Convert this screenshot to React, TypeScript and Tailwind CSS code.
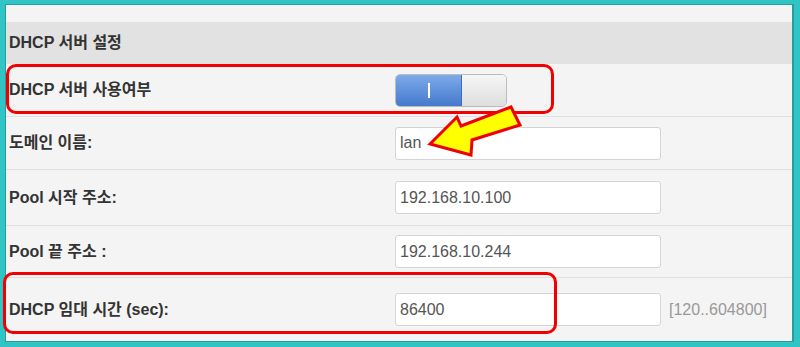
import React from "react";

const font = { fontFamily: '"Liberation Sans", Arial, "Noto Sans CJK KR", sans-serif' };

function Row(props: { label: string; h: string; children?: React.ReactNode; last?: boolean }) {
  return (
    <div className={`flex items-center ${props.h} ${props.last ? "" : "border-b border-[#e0e0e0]"}`}>
      <div className="w-[389px] pl-[3px] text-[16px] font-bold text-[#333]">{props.label}</div>
      {props.children}
    </div>
  );
}

function Field(props: { value: string }) {
  return (
    <div className="w-[266px] h-[33px] flex items-center px-[4px] bg-white border border-[#d4d4d4] rounded-[3px] text-[16px] text-[#555]">
      {props.value}
    </div>
  );
}

export default function App() {
  return (
    <div className="w-[800px] h-[347px] bg-[#31c4c4] pl-[5px] pt-[4px] pr-[6px] pb-[5px]" style={font}>
      <div className="relative h-full bg-[#f4f4f4] border-l border-t border-r-2 border-b border-[#239f9f] flex flex-col">
        <div className="h-[17px] shrink-0" />
        <div className="h-[42px] shrink-0 bg-[#e2e2e2] flex items-center pl-[3px] text-[16px] font-bold text-[#333]">
          DHCP 서버 설정
        </div>
        <Row label="DHCP 서버 사용여부" h="h-[53px]">
          <div className="flex w-[112px] h-[33px] rounded-[5px] border border-[#bbb] overflow-hidden">
            <div className="w-[66px] flex items-center justify-center bg-gradient-to-b from-[#7eaaea] to-[#4579cc] border-r border-[#3a6dbb]">
              <div className="w-[2px] h-[15px] bg-white" />
            </div>
            <div className="flex-1 bg-gradient-to-b from-[#f6f6f6] to-[#dedede]" />
          </div>
        </Row>
        <Row label="도메인 이름:" h="h-[53px]">
          <Field value="lan" />
        </Row>
        <Row label="Pool 시작 주소:" h="h-[56px]">
          <Field value="192.168.10.100" />
        </Row>
        <Row label="Pool 끝 주소 :" h="h-[52px]">
          <Field value="192.168.10.244" />
        </Row>
        <Row label="DHCP 임대 시간 (sec):" h="flex-1" last>
          <Field value="86400" />
          <span className="ml-[8px] text-[16px] text-[#999]">[120..604800]</span>
        </Row>

        <div className="absolute left-[0px] top-[59px] w-[548px] h-[50px] rounded-[10px] border-[3px] border-[#f00000]" />
        <div className="absolute left-[-3px] top-[267px] w-[554px] h-[62px] rounded-[10px] border-[3px] border-[#f00000]" />
        <svg className="absolute left-0 top-0" width="790" height="340" viewBox="6 5 790 340">
          <polygon
            points="430,144 457,117 461,126 511,107 520,125 472,140 471,155"
            fill="#ffff00"
            stroke="#f00000"
            strokeWidth="3"
            strokeLinejoin="miter"
          />
        </svg>
      </div>
    </div>
  );
}
